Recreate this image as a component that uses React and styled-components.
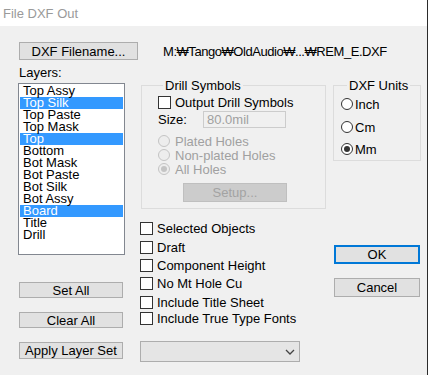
import styled, { createGlobalStyle } from 'styled-components';

const GlobalStyle = createGlobalStyle`
  body {
    margin: 0;
    font-family: 'Liberation Sans', Arial, sans-serif;
    font-size: 13px;
    color: #000000;
  }
`;

const Window = styled.div`
  width: 428px;
  height: 375px;
  box-sizing: border-box;
  border-right: 1px solid #2b2b2b;
  background-color: #f0f0f0;
  display: flex;
  flex-direction: column;
  overflow: hidden;
`;

const TitleBar = styled.div`
  height: 26px;
  flex-shrink: 0;
  background-color: #ffffff;
  color: #9a9a9a;
  padding-left: 3px;
  display: flex;
  align-items: center;
`;

const Body = styled.div`
  padding: 16px 0 0 18px;
`;

const TopRow = styled.div`
  display: flex;
  align-items: center;
  height: 18px;
`;

const Button = styled.button`
  box-sizing: border-box;
  width: ${(p) => p.$w}px;
  height: ${(p) => p.$h || 16}px;
  margin: ${(p) => p.$mt || 0}px 0 0 ${(p) => p.$ml || 0}px;
  padding: 0;
  font-family: inherit;
  font-size: 13px;
  line-height: 1;
  color: ${(p) => (p.$disabled ? '#a3a3a3' : '#000000')};
  background-color: ${(p) => (p.$disabled ? '#cccccc' : '#e1e1e1')};
  border: ${(p) => (p.$default ? '2px solid #0078d7' : p.$disabled ? '1px solid #bfbfbf' : '1px solid #adadad')};
  border-radius: 0;
`;

const PathText = styled.span`
  margin-left: 25px;
  white-space: nowrap;
  letter-spacing: -0.45px;
`;

const MainRow = styled.div`
  display: flex;
  align-items: flex-start;
`;

const LeftCol = styled.div`
  width: 107px;
  display: flex;
  flex-direction: column;
  align-items: flex-start;
`;

const Label = styled.div`
  margin-top: 5px;
  padding-left: 1px;
  line-height: 15px;
`;

const ListBox = styled.div`
  box-sizing: border-box;
  width: 107px;
  height: 172px;
  margin-top: 3px;
  padding: 1px;
  background-color: #ffffff;
  border: 1px solid #828790;
`;

const ListItem = styled.div`
  height: 12px;
  line-height: 12px;
  padding-left: 3px;
  white-space: nowrap;
  background-color: ${(p) => (p.$selected ? '#3399ff' : 'transparent')};
  color: ${(p) => (p.$selected ? '#ffffff' : '#000000')};
`;

const MiddleCol = styled.div`
  width: 186px;
  margin-left: 15px;
  display: flex;
  flex-direction: column;
  align-items: flex-start;
`;

const RightCol = styled.div`
  width: 88px;
  margin-left: 7px;
  display: flex;
  flex-direction: column;
  align-items: flex-start;
`;

const GroupBox = styled.fieldset`
  box-sizing: border-box;
  width: ${(p) => p.$w}px;
  height: ${(p) => p.$h}px;
  margin: 18px 0 0 ${(p) => p.$ml || 0}px;
  padding: 0 0 0 ${(p) => p.$pl}px;
  min-inline-size: 0;
  border: 1px solid #dcdcdc;
  display: flex;
  flex-direction: column;
  align-items: flex-start;
`;

const Legend = styled.legend`
  margin-left: ${(p) => p.$ml}px;
  padding: 0 2px;
  line-height: 15px;
`;

const Row = styled.div`
  display: flex;
  align-items: center;
  height: ${(p) => p.$h || 16}px;
  margin-top: ${(p) => p.$mt || 0}px;
  margin-left: ${(p) => p.$ml || 0}px;
  gap: ${(p) => p.$gap || 4}px;
  white-space: nowrap;
  color: ${(p) => (p.$disabled ? '#a0a0a0' : '#000000')};
`;

const CheckBox = styled.span`
  box-sizing: border-box;
  width: 13px;
  height: 13px;
  flex-shrink: 0;
  background-color: #ffffff;
  border: 1px solid #333333;
`;

const Radio = styled.span`
  box-sizing: border-box;
  width: 12px;
  height: 12px;
  flex-shrink: 0;
  border-radius: 50%;
  display: flex;
  align-items: center;
  justify-content: center;
  background-color: ${(p) => (p.$disabled ? '#ededed' : '#ffffff')};
  border: 1px solid ${(p) => (p.$disabled ? '#c4c4c4' : '#333333')};

  &::after {
    content: '';
    display: ${(p) => (p.$checked ? 'block' : 'none')};
    width: 6px;
    height: 6px;
    border-radius: 50%;
    background-color: ${(p) => (p.$disabled ? '#c4c4c4' : '#333333')};
  }
`;

const SizeLabel = styled.span`
  width: 41px;
`;

const SizeInput = styled.div`
  box-sizing: border-box;
  width: 83px;
  height: 17px;
  padding-left: 3px;
  line-height: 15px;
  color: #a0a0a0;
  border: 1px solid #cccccc;
`;

const Combo = styled.div`
  box-sizing: border-box;
  width: 160px;
  height: 21px;
  margin-top: 15px;
  padding-right: 4px;
  display: flex;
  align-items: center;
  justify-content: flex-end;
  background-color: #e5e5e5;
  border: 1px solid #adadad;
`;

const layers = [
  ['Top Assy', false],
  ['Top Silk', true],
  ['Top Paste', false],
  ['Top Mask', false],
  ['Top', true],
  ['Bottom', false],
  ['Bot Mask', false],
  ['Bot Paste', false],
  ['Bot Silk', false],
  ['Bot Assy', false],
  ['Board', true],
  ['Title', false],
  ['Drill', false],
];

const options = [
  ['Selected Objects', 11],
  ['Draft', 3],
  ['Component Height', 2],
  ['No Mt Hole Cu', 2],
  ['Include Title Sheet', 3],
  ['Include True Type Fonts', 0],
];

export default function App() {
  return (
    <Window>
      <GlobalStyle />
      <TitleBar>File DXF Out</TitleBar>
      <Body>
        <TopRow>
          <Button $w={119} $h={18} $ml={1}>DXF Filename...</Button>
          <PathText>M:₩Tango₩OldAudio₩...₩REM_E.DXF</PathText>
        </TopRow>
        <MainRow>
          <LeftCol>
            <Label>Layers:</Label>
            <ListBox>
              {layers.map(([name, sel]) => (
                <ListItem key={name} $selected={sel}>{name}</ListItem>
              ))}
            </ListBox>
            <Button $w={104} $ml={1} $mt={27}>Set All</Button>
            <Button $w={104} $ml={1} $mt={14}>Clear All</Button>
            <Button $w={104} $h={17} $ml={1} $mt={14}>Apply Layer Set</Button>
          </LeftCol>

          <MiddleCol>
            <GroupBox $w={185} $h={131} $ml={1} $pl={16}>
              <Legend $ml={5}>Drill Symbols</Legend>
              <Row $mt={1}>
                <CheckBox />
                <span>Output Drill Symbols</span>
              </Row>
              <Row $h={17} $mt={1} $gap={0}>
                <SizeLabel>Size:</SizeLabel>
                <SizeInput>80.0mil</SizeInput>
              </Row>
              <Row $h={14} $mt={6} $gap={5} $disabled>
                <Radio $disabled />
                <span>Plated Holes</span>
              </Row>
              <Row $h={14} $gap={5} $disabled>
                <Radio $disabled />
                <span>Non-plated Holes</span>
              </Row>
              <Row $h={14} $gap={5} $disabled>
                <Radio $disabled $checked />
                <span>All Holes</span>
              </Row>
              <Button $w={104} $h={19} $ml={25} $mt={7} $disabled>Setup...</Button>
            </GroupBox>
            {options.map(([text, mt]) => (
              <Row key={text} $mt={mt}>
                <CheckBox />
                <span>{text}</span>
              </Row>
            ))}
            <Combo>
              <svg width="10" height="6" viewBox="0 0 10 6">
                <path d="M1 1 L5 5 L9 1" fill="none" stroke="#444444" strokeWidth="1.3" />
              </svg>
            </Combo>
          </MiddleCol>

          <RightCol>
            <GroupBox $w={88} $h={83} $pl={7}>
              <Legend $ml={6}>DXF Units</Legend>
              <Row $mt={3} $gap={2}>
                <Radio />
                <span>Inch</span>
              </Row>
              <Row $mt={7} $gap={2}>
                <Radio />
                <span>Cm</span>
              </Row>
              <Row $mt={6} $gap={2}>
                <Radio $checked />
                <span>Mm</span>
              </Row>
            </GroupBox>
            <Button $w={86} $h={19} $ml={1} $mt={84} $default>OK</Button>
            <Button $w={86} $h={19} $ml={1} $mt={14}>Cancel</Button>
          </RightCol>
        </MainRow>
      </Body>
    </Window>
  );
}
